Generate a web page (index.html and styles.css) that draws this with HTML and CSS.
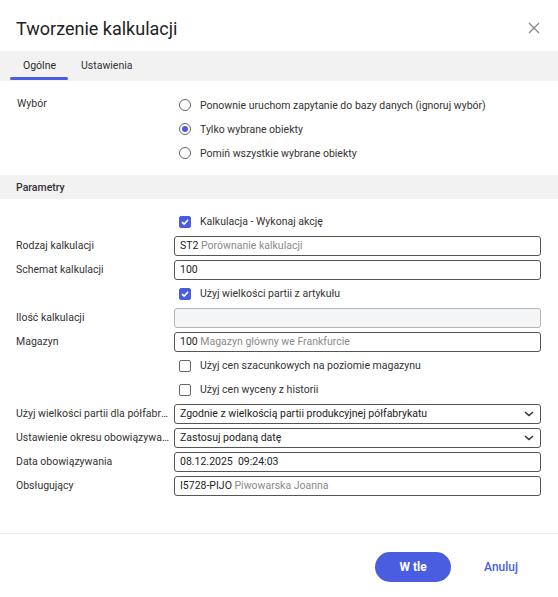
FILE: index.html
```html
<!DOCTYPE html>
<html lang="pl">
<head>
<meta charset="utf-8">
<title>Tworzenie kalkulacji</title>
<link rel="stylesheet" href="styles.css">
</head>
<body>
<div class="dialog">
  <header class="header">
    <h1 class="title">Tworzenie kalkulacji</h1>
    <button class="close" aria-label="Zamknij">
      <svg width="12" height="12" viewBox="0 0 12 12"><path d="M1 1L11 11M11 1L1 11" stroke="#8a8a8a" stroke-width="1.4" fill="none"/></svg>
    </button>
  </header>
  <nav class="tabs">
    <div class="tab active">Ogólne</div>
    <div class="tab">Ustawienia</div>
  </nav>

  <section class="choice">
    <div class="label">Wybór</div>
    <div class="radios">
      <label class="opt"><span class="radio"></span>Ponownie uruchom zapytanie do bazy danych (ignoruj wybór)</label>
      <label class="opt"><span class="radio on"></span>Tylko wybrane obiekty</label>
      <label class="opt"><span class="radio"></span>Pomiń wszystkie wybrane obiekty</label>
    </div>
  </section>

  <div class="band">Parametry</div>

  <section class="form">
    <div class="label"></div>
    <div class="field"><label class="opt"><span class="check on"><svg width="12" height="12" viewBox="0 0 12 12"><path d="M3 6.2L5.1 8.2L9 3.9" stroke="#fff" stroke-width="1.6" fill="none"/></svg></span>Kalkulacja - Wykonaj akcję</label></div>

    <div class="label">Rodzaj kalkulacji</div>
    <div class="field"><div class="input">ST2 <span class="muted">Porównanie kalkulacji</span></div></div>

    <div class="label">Schemat kalkulacji</div>
    <div class="field"><div class="input">100</div></div>

    <div class="label"></div>
    <div class="field"><label class="opt"><span class="check on"><svg width="12" height="12" viewBox="0 0 12 12"><path d="M3 6.2L5.1 8.2L9 3.9" stroke="#fff" stroke-width="1.6" fill="none"/></svg></span>Użyj wielkości partii z artykułu</label></div>

    <div class="label">Ilość kalkulacji</div>
    <div class="field"><div class="input disabled"></div></div>

    <div class="label">Magazyn</div>
    <div class="field"><div class="input">100 <span class="muted">Magazyn główny we Frankfurcie</span></div></div>

    <div class="label"></div>
    <div class="field"><label class="opt"><span class="check"></span>Użyj cen szacunkowych na poziomie magazynu</label></div>

    <div class="label"></div>
    <div class="field"><label class="opt"><span class="check"></span>Użyj cen wyceny z historii</label></div>

    <div class="label">Użyj wielkości partii dla półfabrykatów</div>
    <div class="field"><div class="input select">Zgodnie z wielkością partii produkcyjnej półfabrykatu<svg class="chev" width="10" height="6" viewBox="0 0 10 6"><path d="M1 1L5 4.6L9 1" stroke="#333" stroke-width="1.5" fill="none"/></svg></div></div>

    <div class="label">Ustawienie okresu obowiązywania</div>
    <div class="field"><div class="input select">Zastosuj podaną datę<svg class="chev" width="10" height="6" viewBox="0 0 10 6"><path d="M1 1L5 4.6L9 1" stroke="#333" stroke-width="1.5" fill="none"/></svg></div></div>

    <div class="label">Data obowiązywania</div>
    <div class="field"><div class="input">08.12.2025&nbsp;&nbsp;09:24:03</div></div>

    <div class="label">Obsługujący</div>
    <div class="field"><div class="input">I5728-PIJO <span class="muted">Piwowarska Joanna</span></div></div>
  </section>

  <footer class="footer">
    <button class="btn primary">W tle</button>
    <button class="btn link">Anuluj</button>
  </footer>
</div>
</body>
</html>
```

FILE: styles.css
```css
* { box-sizing: border-box; }
html, body { margin: 0; padding: 0; background: #fff; }
body {
  font-family: Roboto, "Liberation Sans", Arial, sans-serif;
  font-size: 10.5px;
  color: #333;
}
.dialog { width: 558px; }

.header {
  height: 51px;
  display: flex;
  align-items: center;
  justify-content: space-between;
  padding: 0 18px 0 16px;
}
.title {
  margin: 0;
  font-size: 18px;
  font-weight: 400;
  color: #222;
  padding-top: 6px;
}
.close {
  border: 0;
  background: none;
  padding: 0;
  width: 12px;
  height: 12px;
  display: flex;
  margin-top: 4px;
}

.tabs {
  height: 30px;
  background: #f2f2f2;
  display: flex;
  padding-left: 10px;
}
.tab {
  position: relative;
  height: 30px;
  line-height: 30px;
  padding: 0 12px 0 13px;
  color: #333;
}
.tab.active { color: #2a2a2a; }
.tab.active::after {
  content: "";
  position: absolute;
  left: 0;
  right: 0;
  bottom: 1px;
  height: 3px;
  border-radius: 2px;
  background: #4a5ce0;
}

.choice {
  display: grid;
  grid-template-columns: 158px 1fr;
  padding: 12px 17px 10px 16px;
}
.choice .label { line-height: 22px; padding-left: 1px; }
.radios { display: flex; flex-direction: column; }

.opt {
  display: flex;
  align-items: center;
  height: 24px;
  padding-left: 5px;
  gap: 9px;
  color: #333;
  white-space: nowrap;
}
.radio {
  width: 12px;
  height: 12px;
  border: 1px solid #666;
  border-radius: 50%;
  display: flex;
  align-items: center;
  justify-content: center;
  flex: none;
}
.radio.on::after {
  content: "";
  width: 6px;
  height: 6px;
  border-radius: 50%;
  background: #4a5ce0;
}
.check {
  width: 12px;
  height: 12px;
  border: 1px solid #666;
  border-radius: 2px;
  flex: none;
  display: flex;
}
.check.on {
  background: #4a5ce0;
  border-color: #4a5ce0;
}
.check.on svg { margin: -1px; }

.band {
  height: 24px;
  line-height: 25px;
  background: #f2f2f2;
  padding-left: 16px;
  font-weight: 500;
  color: #333;
}

.form {
  display: grid;
  grid-template-columns: 158px 367px;
  grid-auto-rows: 24px;
  padding: 10px 0 36px 16px;
}
.form .label {
  line-height: 24px;
  padding-top: 1px;
  white-space: nowrap;
  overflow: hidden;
  text-overflow: ellipsis;
  padding-right: 4px;
}
.field { display: flex; align-items: center; padding-top: 1px; }
.input {
  width: 100%;
  height: 20px;
  border: 1px solid #555;
  border-radius: 3px;
  padding: 0 6px 0 5px;
  display: flex;
  align-items: center;
  color: #222;
  white-space: pre;
}
.input.disabled {
  background: #f4f5f7;
  border-color: #b5b5b5;
}
.muted { color: #8a8a8a; }
.select { justify-content: space-between; }
.chev { flex: none; margin-right: 0; }

.footer {
  border-top: 1px solid #ececec;
  display: flex;
  justify-content: flex-end;
  align-items: center;
  padding: 18px 30px 15px 0;
  gap: 23px;
}
.btn {
  font-family: Roboto, "Liberation Sans", Arial, sans-serif;
  font-size: 12px;
  border: 0;
  cursor: pointer;
}
.btn.primary {
  width: 76px;
  height: 30px;
  border-radius: 15px;
  background: #4a5ce0;
  color: #fff;
  font-weight: 700;
}
.btn.link {
  background: none;
  color: #4a5ce0;
  font-weight: 500;
  padding: 0 10px;
}
```
